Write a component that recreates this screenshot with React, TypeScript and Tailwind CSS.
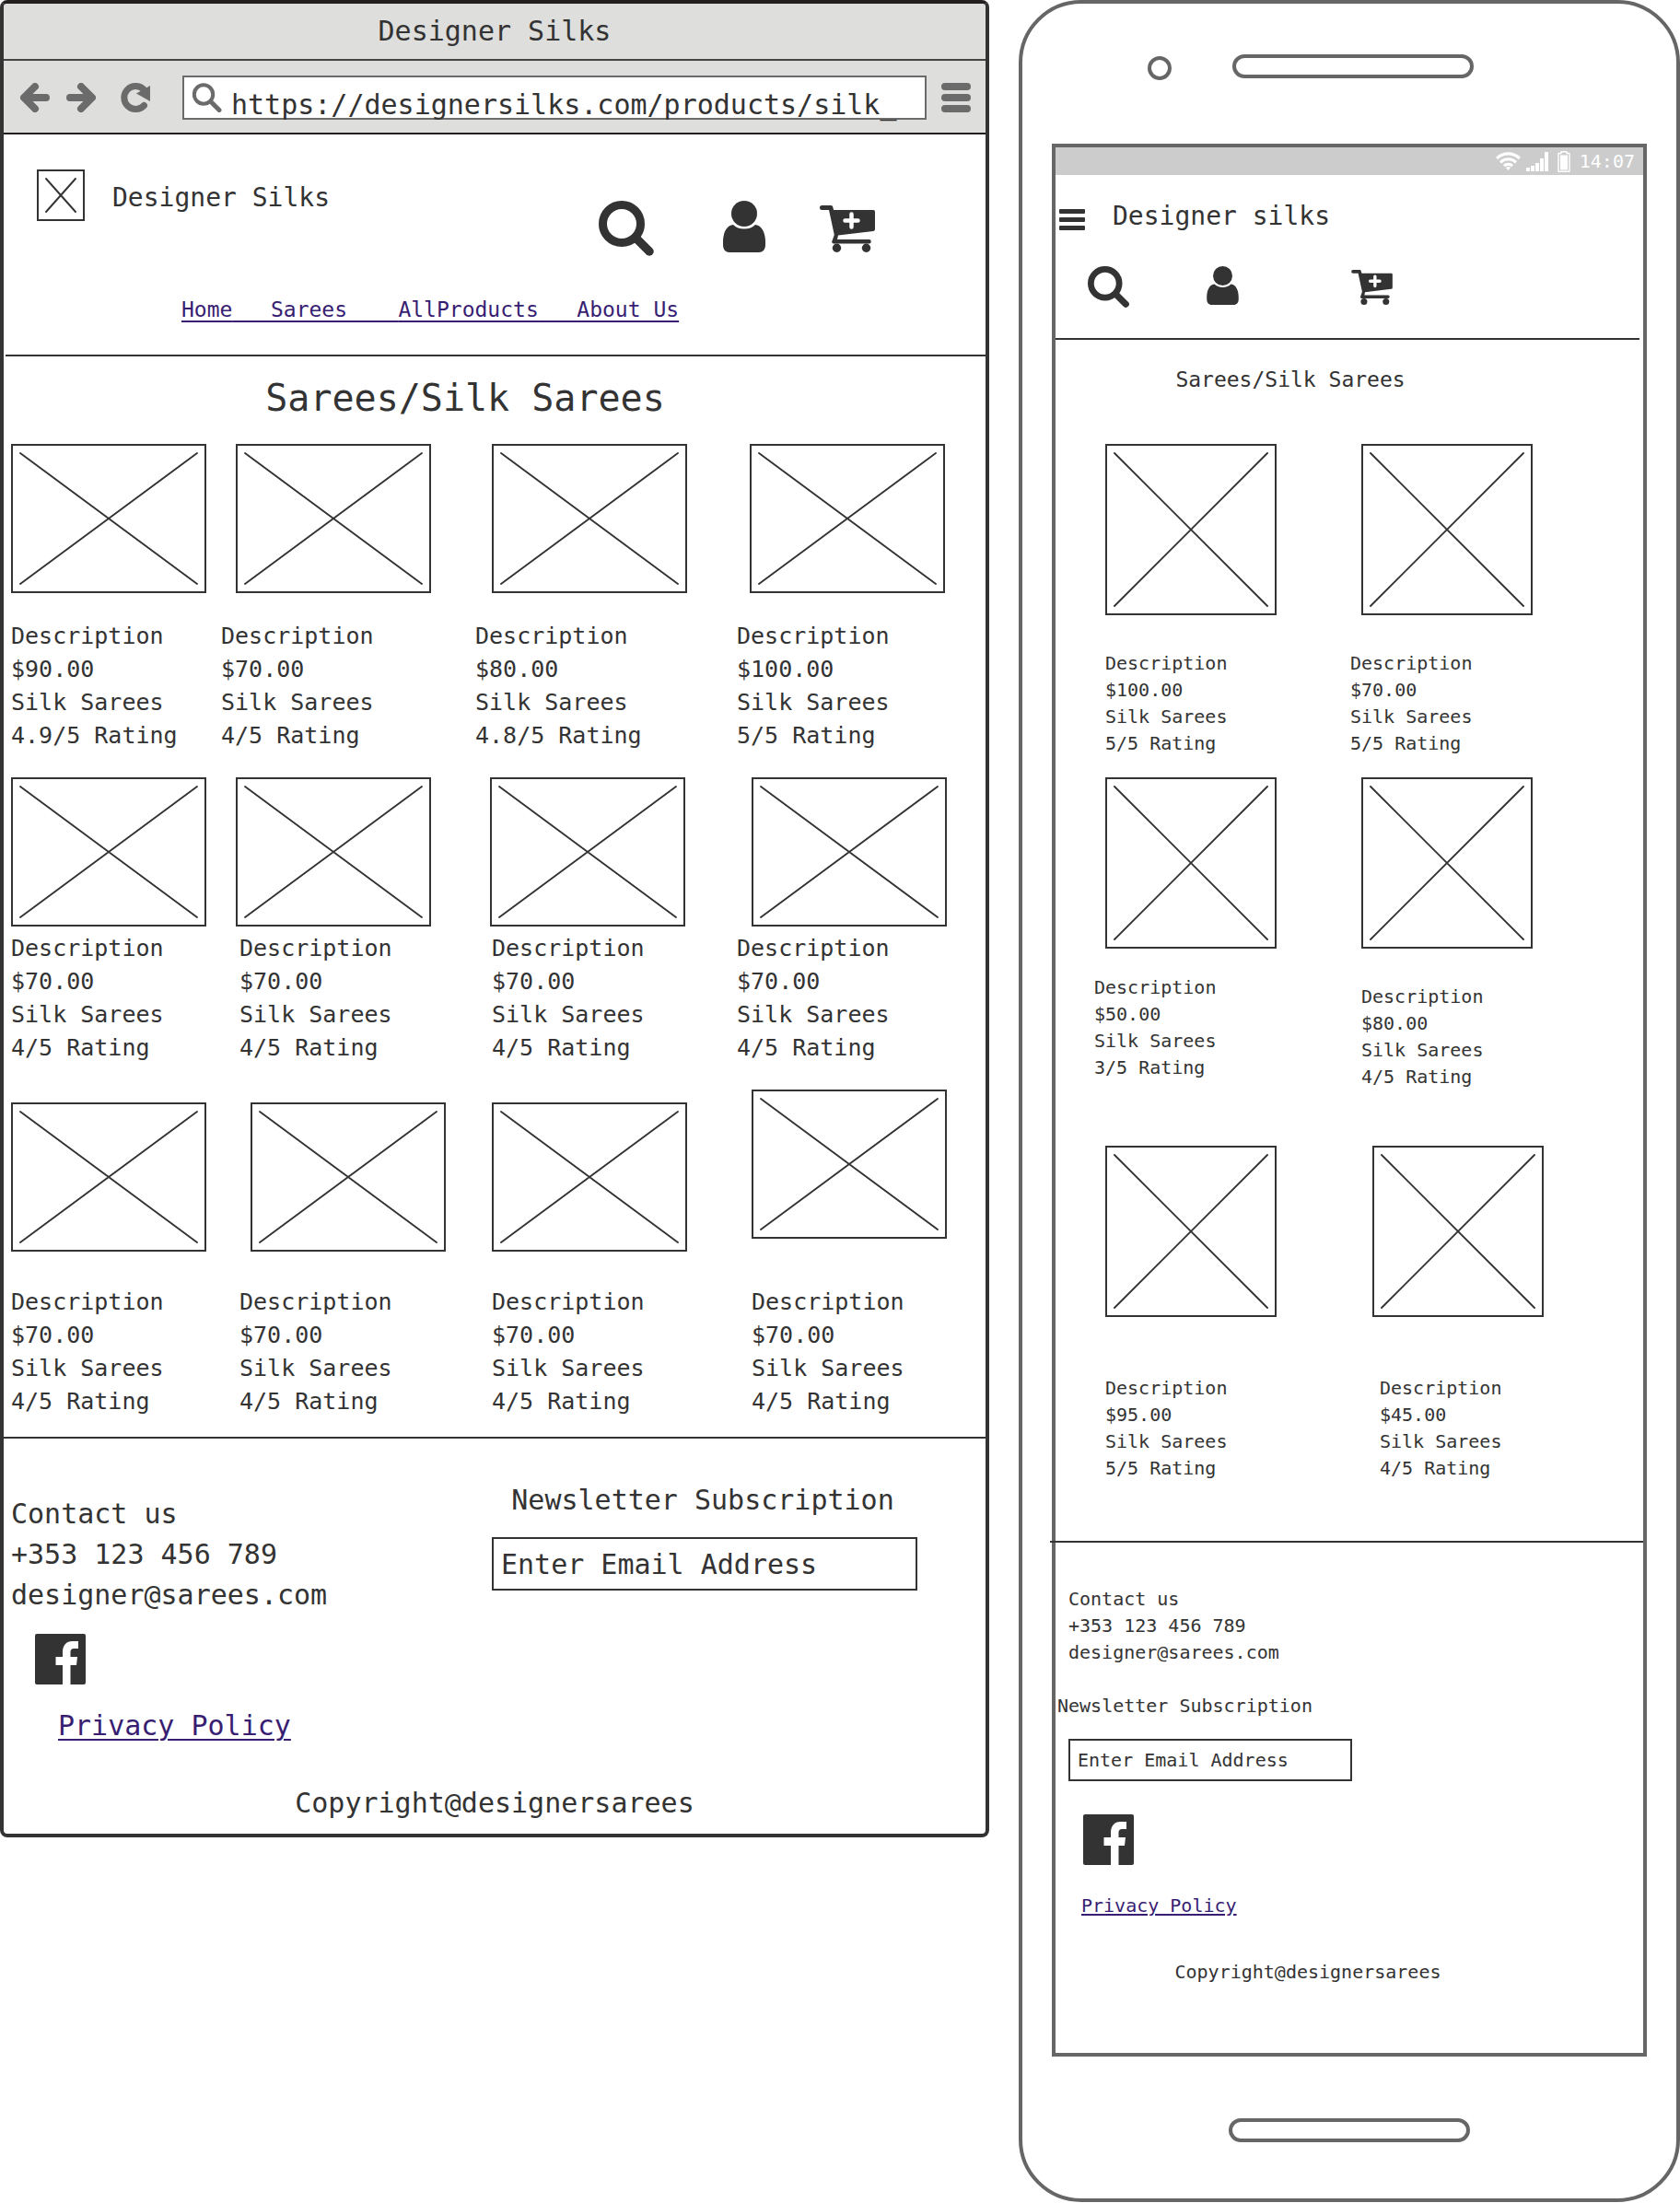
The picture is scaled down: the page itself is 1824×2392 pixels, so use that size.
import React from "react";

type Item = {
  price: string;
  rating: string;
  image: string;
  text: string;
};

const desktopItems: Item[] = [
  { price: "$90.00", rating: "4.9/5 Rating", image: "", text: "mt-[29px]" },
  { price: "$70.00", rating: "4/5 Rating", image: "ml-4", text: "mt-[29px]" },
  { price: "$80.00", rating: "4.8/5 Rating", image: "ml-[18px]", text: "mt-[29px]" },
  { price: "$100.00", rating: "5/5 Rating", image: "ml-[14px]", text: "mt-[29px]" },
  { price: "$70.00", rating: "4/5 Rating", image: "", text: "mt-[6px]" },
  { price: "$70.00", rating: "4/5 Rating", image: "ml-4", text: "mt-[6px] ml-5" },
  { price: "$70.00", rating: "4/5 Rating", image: "ml-4", text: "mt-[6px] ml-[18px]" },
  { price: "$70.00", rating: "4/5 Rating", image: "ml-4", text: "mt-[6px]" },
  { price: "$70.00", rating: "4/5 Rating", image: "mt-[14px]", text: "mt-[37px]" },
  { price: "$70.00", rating: "4/5 Rating", image: "mt-[14px] ml-8", text: "mt-[37px] ml-5" },
  { price: "$70.00", rating: "4/5 Rating", image: "mt-[14px] ml-[18px]", text: "mt-[37px] ml-[18px]" },
  { price: "$70.00", rating: "4/5 Rating", image: "ml-4", text: "mt-[51px] ml-4" },
];

const mobileItems: Item[] = [
  { price: "$100.00", rating: "5/5 Rating", image: "ml-3", text: "mt-[38px] ml-3" },
  { price: "$70.00", rating: "5/5 Rating", image: "ml-3", text: "mt-[38px]" },
  { price: "$50.00", rating: "3/5 Rating", image: "ml-3", text: "mt-[28px]" },
  { price: "$80.00", rating: "4/5 Rating", image: "ml-3", text: "mt-[38px] ml-3" },
  { price: "$95.00", rating: "5/5 Rating", image: "mt-[38px] ml-3", text: "mt-[63px] ml-3" },
  { price: "$45.00", rating: "4/5 Rating", image: "mt-[38px] ml-6", text: "mt-[63px] ml-8" },
];

function Placeholder({ w, h, className }: { w: number; h: number; className: string }) {
  return (
    <svg viewBox={`0 0 ${w} ${h}`} className={`block max-w-full ${className}`} fill="none" stroke="#333" aria-hidden="true">
      <rect x="1" y="1" width={w - 2} height={h - 2} strokeWidth="2" />
      <path d={`M10 10L${w - 10} ${h - 10}M${w - 10} 10L10 ${h - 10}`} strokeWidth="1.900" strokeLinecap="round" />
    </svg>
  );
}

function SearchIcon({ className }: { className: string }) {
  return (
    <svg viewBox="0 0 60 60" className={className} fill="none" stroke="#333" aria-hidden="true">
      <circle cx="25" cy="25" r="20.500" strokeWidth="9" />
      <path d="M42 42L55 55" strokeWidth="9.500" strokeLinecap="round" />
    </svg>
  );
}

function PersonIcon({ className }: { className: string }) {
  return (
    <svg viewBox="0 0 46 56" className={className} fill="#333" aria-hidden="true">
      <circle cx="23" cy="14" r="14" />
      <path d="M11 26C3 27 0 36 0 45v3c0 5 3 8 7 8h32c4 0 7-3 7-8v-3c0-9-3-18-11-19c-3 3-7 4.500-12 4.500S14 29 11 26z" />
    </svg>
  );
}

function CartIcon({ className }: { className: string }) {
  return (
    <svg viewBox="0 0 60 51" className={className} fill="#333" aria-hidden="true">
      <path d="M2.500 0H12c1.500 0 2 .8 2.300 2l.8 3H58c1.500 0 2 .7 2 2v18.500c0 1.500-.6 2.200-2 2.500L20 32.500l-1 4.500h34.500a2.300 2.300 0 0 1 0 4.600H15a2 2 0 0 1-1.500-3L15.800 32L10 5H2.500a2.500 2.500 0 0 1 0-5z" />
      <circle cx="18.500" cy="46.300" r="4.700" />
      <circle cx="50.500" cy="46.300" r="4.700" />
      <path d="M34.500 9.500v14M27.500 16.500h14" stroke="#fff" strokeWidth="4.500" strokeLinecap="round" />
    </svg>
  );
}

function FacebookIcon() {
  return (
    <svg viewBox="0 0 55 55" className="size-[55px]" aria-hidden="true">
      <rect width="55" height="55" rx="2" fill="#333" />
      <path d="M30 55V34h-7.500v-9H30v-5c0-7.500 4-12 10.500-12H47v8h-4c-3.500 0-4.500 1.500-4.500 4v5H46l-1 9h-6.500v21z" fill="#fff" />
    </svg>
  );
}

function Details({ item, className }: { item: Item; className: string }) {
  return (
    <div className={`whitespace-nowrap ${className}`}>
      <p>Description</p>
      <p>{item.price}</p>
      <p>Silk Sarees</p>
      <p>{item.rating}</p>
    </div>
  );
}

function BrowserBar() {
  return (
    <div className="bg-[#dededc]">
      <div className="border-b-2 border-[#444] text-center text-[30px] leading-[60px]">Designer Silks</div>
      <div className="flex h-20 items-start border-b-2 border-[#231f20] pl-[18px] pr-4">
        <button type="button" aria-label="Back" className="mt-6 mr-[18px]">
          <svg viewBox="0 0 32 32" className="size-8" fill="none" stroke="#6b6b6b" strokeWidth="8" strokeLinecap="round" strokeLinejoin="round">
            <path d="M16 4L4 16L16 28M6 16H28" />
          </svg>
        </button>
        <button type="button" aria-label="Forward" className="mt-6 mr-[27px]">
          <svg viewBox="0 0 32 32" className="size-8" fill="none" stroke="#6b6b6b" strokeWidth="8" strokeLinecap="round" strokeLinejoin="round">
            <path d="M16 4L28 16L16 28M26 16H4" />
          </svg>
        </button>
        <button type="button" aria-label="Reload" className="mt-6 mr-[35px]">
          <svg viewBox="0 0 32 32" className="size-8" fill="none">
            <path d="M25.500 24.500A12.500 12.500 0 1 1 25 7" stroke="#6b6b6b" strokeWidth="7" strokeLinecap="round" />
            <path d="M32 3v17L17 11.500z" fill="#6b6b6b" />
          </svg>
        </button>
        <label className="mt-4 flex h-12 min-w-0 flex-1 items-start border-2 border-[#6b6b6b] bg-white">
          <svg viewBox="0 0 32 32" className="mt-[6px] ml-[9px] size-8 shrink-0" fill="none" stroke="#6b6b6b" aria-hidden="true">
            <circle cx="12" cy="12.500" r="10.200" strokeWidth="4" />
            <path d="M20.500 21L29 29.500" strokeWidth="5" strokeLinecap="round" />
          </svg>
          <input
            aria-label="Address"
            defaultValue="https://designersilks.com/products/silk_"
            className="mt-[10px] ml-[10px] h-10 min-w-0 flex-1 bg-transparent text-[30px] leading-10 outline-none"
          />
        </label>
        <button type="button" aria-label="Menu" className="mt-6 ml-4 flex w-8 flex-col gap-1">
          <span className="h-2 rounded-full bg-[#6b6b6b]" />
          <span className="h-2 rounded-full bg-[#6b6b6b]" />
          <span className="h-2 rounded-full bg-[#6b6b6b]" />
        </button>
      </div>
    </div>
  );
}

function DesktopSite() {
  return (
    <section className="overflow-hidden rounded-lg border-4 border-[#333] border-t-[#231f20] bg-white">
      <BrowserBar />
      <header className="ml-[2px] border-b-2 border-[#333] pt-[38px] pb-[31px]">
        <div className="flex items-start pr-[120px] pl-[34px]">
          <svg viewBox="0 0 52 56" className="h-14 w-[52px]" fill="none" stroke="#333" aria-hidden="true">
            <rect x="1" y="1" width="50" height="54" strokeWidth="2" />
            <path d="M10 10L42 46M42 10L10 46" strokeWidth="1.900" strokeLinecap="round" />
          </svg>
          <p className="ml-[30px] text-[28px] leading-[62px] whitespace-nowrap">Designer Silks</p>
          <div className="mt-[34px] ml-auto flex h-[60px] items-start">
            <button type="button" aria-label="Search">
              <SearchIcon className="size-[60px]" />
            </button>
            <button type="button" aria-label="Account" className="ml-[75px]">
              <PersonIcon className="h-14 w-[46px]" />
            </button>
            <button type="button" aria-label="Cart" className="mt-[5px] ml-[59px]">
              <CartIcon className="h-[51px] w-[60px]" />
            </button>
          </div>
        </div>
        <nav className="mt-10 ml-[191px] text-[23px] leading-9 whitespace-pre text-[#381e72] underline decoration-2 underline-offset-4">
          <a href="#home">Home</a>
          {"   "}
          <a href="#sarees">Sarees</a>
          {"    "}
          <a href="#all-products">AllProducts</a>
          {"   "}
          <a href="#about">About Us</a>
        </nav>
      </header>
      <main className="border-b-2 border-[#333] pt-[15px] pb-5">
        <h1 className="pr-16 text-center text-[40px] leading-[60px]">Sarees/Silk Sarees</h1>
        <ul className="mt-5 grid grid-cols-[228fr_276fr_284fr_270fr] gap-y-[27px] pl-2 text-[25px] leading-9">
          {desktopItems.map((item, i) => (
            <li key={i}>
              <Placeholder w={212} h={162} className={`w-[212px] ${item.image}`} />
              <Details item={item} className={item.text} />
            </li>
          ))}
        </ul>
      </main>
      <footer className="pb-[11px] text-[30px]">
        <div className="grid grid-cols-[530fr_536fr]">
          <div className="pt-[60px] pl-2">
            <address className="leading-[44px] not-italic">
              <p>Contact us</p>
              <p>+353 123 456 789</p>
              <p>designer@sarees.com</p>
            </address>
            <a href="#facebook" aria-label="Facebook" className="mt-5 ml-[26px] block w-fit">
              <FacebookIcon />
            </a>
            <a href="#privacy" className="mt-[23px] ml-[51px] block w-fit leading-[44px] text-[#381e72] underline decoration-2 underline-offset-4">
              Privacy Policy
            </a>
          </div>
          <div className="pt-[45px] pr-[74px]">
            <label htmlFor="desktop-email" className="block pr-1 text-center leading-[44px] whitespace-nowrap">
              Newsletter Subscription
            </label>
            <input
              id="desktop-email"
              type="email"
              placeholder="Enter Email Address"
              className="mt-[18px] h-[58px] w-full border-2 border-[#333] px-2 placeholder:text-[#333]"
            />
          </div>
        </div>
        <p className="mt-10 text-center leading-[44px]">Copyright@designersarees</p>
      </footer>
    </section>
  );
}

function StatusBar() {
  return (
    <div className="flex h-[30px] items-center justify-end bg-[#ccc] pr-[9px] text-[20px] leading-[30px] text-white">
      <svg viewBox="0 0 27 20" className="h-5 w-[27px]" fill="none" stroke="#fff" strokeWidth="3.200" aria-hidden="true">
        <path d="M1.200 7a17.500 17.500 0 0 1 24.600 0M5 11.300a12 12 0 0 1 17 0M9 15.200a6.500 6.500 0 0 1 9 0" />
        <path d="M11 17.300a3.500 3.500 0 0 1 5 0L13.500 20z" fill="#fff" stroke="none" />
      </svg>
      <svg viewBox="0 0 24 21" className="ml-[6px] h-[21px] w-6" fill="#fff" aria-hidden="true">
        <path d="M0 17h4v4H0zM5 15h4v6H5zM10 12h4v9h-4zM15 7h4v14h-4zM20 0h4v21h-4z" />
      </svg>
      <svg viewBox="0 0 14 23" className="mx-[10px] h-[23px] w-[14px]" fill="none" stroke="#fff" aria-hidden="true">
        <path d="M4 0.800h6v1.700h3v19.700H1V2.500h3z" strokeWidth="1.400" strokeLinejoin="round" />
        <rect x="3" y="4.500" width="8" height="16" fill="#fff" stroke="none" />
      </svg>
      <span>14:07</span>
    </div>
  );
}

function MobileSite() {
  return (
    <section className="flex flex-col rounded-[68px] border-4 border-[#666] bg-white px-8 pt-[55px] pb-[61px]">
      <div className="flex items-start gap-[66px] pl-[104px]">
        <span className="mt-[2px] size-[26px] rounded-full border-4 border-[#666]" />
        <span className="h-[26px] w-[262px] rounded-full border-4 border-[#666]" />
      </div>
      <div className="mt-[69px] border-4 border-[#666] pb-[73px]">
        <StatusBar />
        <header className="mr-1 h-[179px] border-b-2 border-[#333] pt-[28px]">
          <div className="flex items-start pl-1">
            <button type="button" aria-label="Menu" className="mt-[9px] flex w-7 flex-col gap-1">
              <span className="h-[5px] rounded-[1px] bg-[#333]" />
              <span className="h-[5px] rounded-[1px] bg-[#333]" />
              <span className="h-[5px] rounded-[1px] bg-[#333]" />
            </button>
            <p className="ml-[30px] text-[28px] leading-[34px]">Designer silks</p>
          </div>
          <div className="mt-[37px] flex items-start pl-[35px]">
            <button type="button" aria-label="Search">
              <SearchIcon className="size-[45px]" />
            </button>
            <button type="button" aria-label="Account" className="ml-[84px]">
              <PersonIcon className="h-[42px] w-[35px]" />
            </button>
            <button type="button" aria-label="Cart" className="mt-1 ml-[122px]">
              <CartIcon className="h-[38px] w-[45px]" />
            </button>
          </div>
        </header>
        <main className="pb-16">
          <h1 className="pt-[25px] pr-32 text-center text-[23px] leading-9">Sarees/Silk Sarees</h1>
          <ul className="mt-[52px] grid grid-cols-[278fr_318fr] gap-y-[22px] pl-[42px] text-[20px] leading-[29px]">
            {mobileItems.map((item, i) => (
              <li key={i}>
                <Placeholder w={186} h={186} className={`w-[186px] ${item.image}`} />
                <Details item={item} className={item.text} />
              </li>
            ))}
          </ul>
        </main>
        <footer className="-ml-[6px] border-t-2 border-[#333] pt-[47px] pl-[6px] text-[20px] leading-[29px]">
          <address className="ml-[14px] not-italic">
            <p>Contact us</p>
            <p>+353 123 456 789</p>
            <p>designer@sarees.com</p>
          </address>
          <label htmlFor="mobile-email" className="mt-[29px] ml-[2px] block">
            Newsletter Subscription
          </label>
          <input
            id="mobile-email"
            type="email"
            placeholder="Enter Email Address"
            className="mt-[21px] ml-[14px] block h-[46px] w-[308px] max-w-full border-2 border-[#333] px-2 placeholder:text-[#333]"
          />
          <a href="#facebook" aria-label="Facebook" className="mt-9 ml-[30px] block w-fit">
            <FacebookIcon />
          </a>
          <a href="#privacy" className="mt-[30px] ml-[28px] block w-fit text-[#381e72] underline decoration-2 underline-offset-2">
            Privacy Policy
          </a>
          <p className="mt-[43px] pr-[90px] text-center">Copyright@designersarees</p>
        </footer>
      </div>
      <span className="mt-[67px] h-[26px] w-[262px] self-center rounded-full border-4 border-[#666]" />
    </section>
  );
}

export default function App() {
  return (
    <div className="grid grid-cols-[1074fr_718fr] items-start gap-8 bg-white font-['DejaVu_Sans_Mono',monospace] text-[#333]">
      <DesktopSite />
      <MobileSite />
    </div>
  );
}
